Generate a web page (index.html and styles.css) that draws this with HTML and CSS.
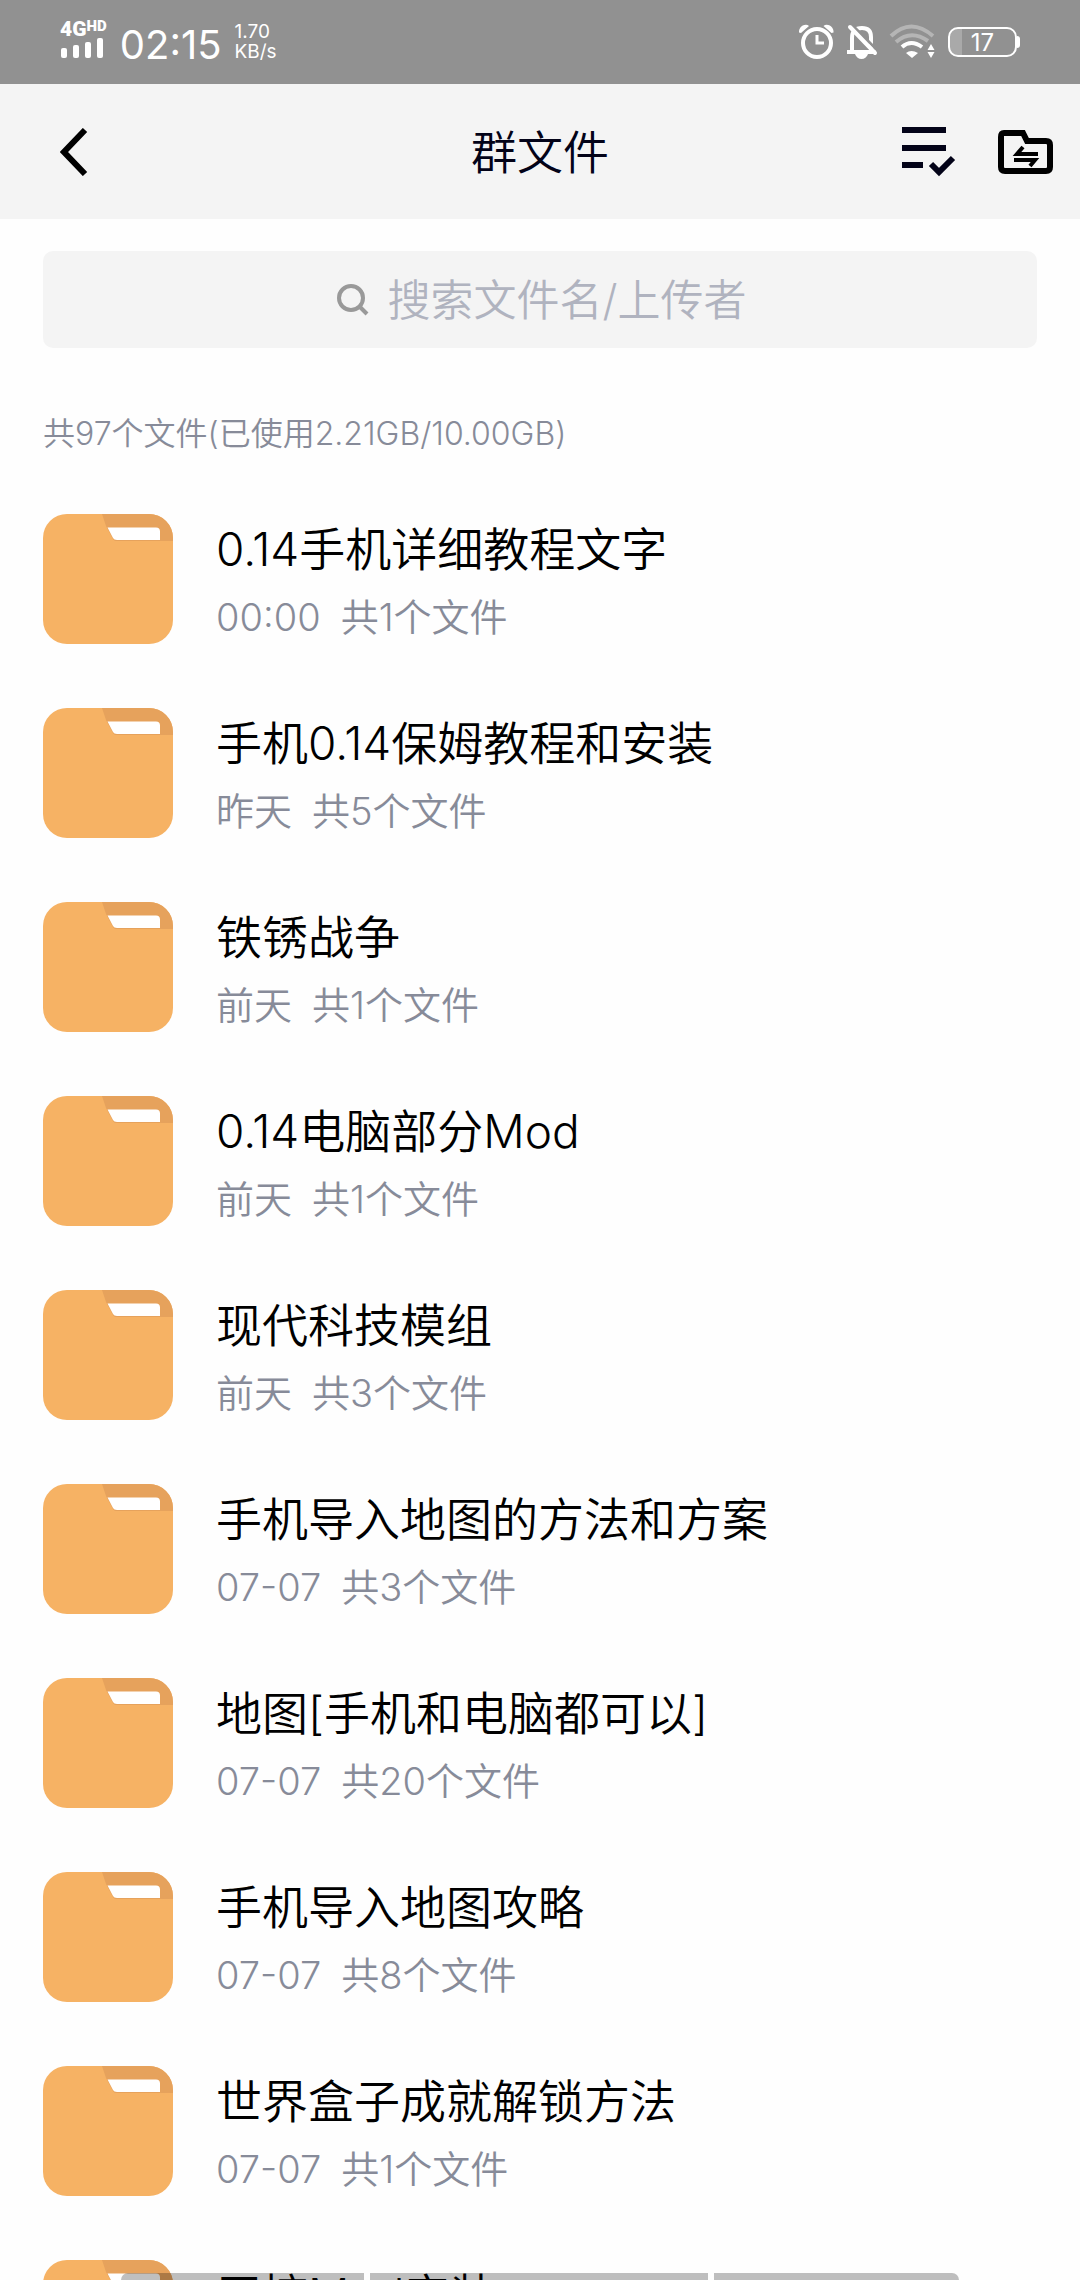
FILE: index.html
```html
<!DOCTYPE html>
<html lang="zh-CN">
<head>
<meta charset="utf-8">
<meta name="viewport" content="width=device-width, initial-scale=1">
<title>群文件</title>
<link rel="stylesheet" href="styles.css">
</head>
<body>
<svg class="sprite" aria-hidden="true">
  <symbol id="folder" viewBox="0 0 130 130">
    <rect width="130" height="130" rx="24" fill="#f6b264"/>
    <path d="M59 0H106A24 24 0 0 1 130 24V27H73Q71 27 70 25L63 12Z" fill="#e6a25c"/>
    <path d="M64.500 13.500H113Q117 13.500 117 17.500V26H74Q71 26 70 24Z" fill="#fff"/>
  </symbol>
</svg>
<div class="screen">
  <div class="status">
    <div class="status-group">
      <div class="signal">
        <span class="network">4G<sup class="hd">HD</sup></span>
        <svg width="44" height="20" viewBox="0 0 44 20" fill="#fff"><rect x="1" y="10" width="6" height="10" rx="2"/><rect x="13" y="7" width="6" height="13" rx="2"/><rect x="25" y="4" width="6" height="16" rx="2"/><rect x="37" y="0" width="6" height="20" rx="2"/></svg>
      </div>
      <time class="clock">02:15</time>
      <div class="speed"><span>1.70</span><span>KB/s</span></div>
    </div>
    <div class="status-group status-right">
      <svg width="36" height="36" viewBox="0 0 36 36" fill="none" stroke="#fff"><circle cx="18" cy="19" r="14" stroke-width="4"/><path d="M18 11V19H25" stroke-width="3"/><path d="M0 8.500A7 7 0 0 1 8.500 1L10 2L2 9ZM34.500 8.500A7 7 0 0 0 26 1L24.500 2L32.500 9Z" fill="#fff" stroke="none"/></svg>
      <svg width="32" height="36" viewBox="0 0 32 36" fill="none" stroke="#fff"><path d="M6 28V14Q6 4 16 4Q25 4 25 13V28" stroke-width="4"/><path d="M1 28H30" stroke-width="4"/><path d="M9 30H22Q20 35 15.500 35Q11 35 9 30Z" fill="#fff" stroke="none"/><path d="M5 0L32 27" stroke="#919191" stroke-width="3"/><path d="M4 3L29 29" stroke-width="4" stroke-linecap="round"/></svg>
      <svg width="48" height="36" viewBox="0 0 48 36" fill="none" stroke="#fff" stroke-width="4"><path d="M2 12Q22 -7 44 12" stroke="#b5b5b5"/><path d="M7 18Q22 5 39 17" stroke="#b5b5b5"/><path d="M13 23Q22 15 33 23"/><path d="M17 29Q22 25 29 29L23 34Z" fill="#fff" stroke="none"/><path d="M42 20L45.500 26H38.500ZM42 34L38.500 28H45.500Z" fill="#fff" stroke="none"/></svg>
      <div class="battery"><span class="battery-level">17</span></div>
    </div>
  </div>

  <header class="nav">
    <div class="nav-side nav-back">
      <button class="icon-button" type="button" aria-label="返回"><svg width="28" height="48" viewBox="0 0 28 48" fill="none" stroke="#000" stroke-width="6"><path d="M25 2L4 24L25 46"/></svg></button>
    </div>
    <h1 class="nav-title">群文件</h1>
    <div class="nav-side nav-actions">
      <button class="icon-button" type="button" aria-label="多选"><svg width="56" height="52" viewBox="0 0 56 52" fill="none" stroke="#030318"><path d="M2 4H46M2 22H46M2 39H23" stroke-width="6"/><path d="M31 38L39 46L53 32" stroke-width="6"/></svg></button>
      <button class="icon-button" type="button" aria-label="传输列表"><svg width="56" height="44" viewBox="0 0 56 44" fill="none" stroke="#000"><path d="M6 3H25L29 11H48Q52 11 52 15V37Q52 41 48 41H7Q3 41 3 37V7Q3 3 6 3Z" stroke-width="6"/><path d="M40 24H19L25 17M16 30H37L32 36" stroke-width="4"/></svg></button>
    </div>
  </header>

  <main class="content">
    <label class="search">
      <svg width="32" height="32" viewBox="0 0 32 32" fill="none" stroke="#999"><circle cx="14" cy="14" r="12" stroke-width="4"/><path d="M22 22L30 30" stroke-width="4"/></svg>
      <input class="search-input" type="text" aria-label="搜索文件" placeholder="搜索文件名/上传者">
    </label>
    <p class="summary">共97个文件(已使用2.21GB/10.00GB)</p>
    <ul class="files">
      <li class="file"><svg class="file-icon"><use href="#folder"/></svg><div class="file-text"><h2 class="file-name">0.14手机详细教程文字</h2><p class="file-meta"><span>00:00</span><span>共1个文件</span></p></div></li>
      <li class="file"><svg class="file-icon"><use href="#folder"/></svg><div class="file-text"><h2 class="file-name">手机0.14保姆教程和安装</h2><p class="file-meta"><span>昨天</span><span>共5个文件</span></p></div></li>
      <li class="file"><svg class="file-icon"><use href="#folder"/></svg><div class="file-text"><h2 class="file-name">铁锈战争</h2><p class="file-meta"><span>前天</span><span>共1个文件</span></p></div></li>
      <li class="file"><svg class="file-icon"><use href="#folder"/></svg><div class="file-text"><h2 class="file-name">0.14电脑部分Mod</h2><p class="file-meta"><span>前天</span><span>共1个文件</span></p></div></li>
      <li class="file"><svg class="file-icon"><use href="#folder"/></svg><div class="file-text"><h2 class="file-name">现代科技模组</h2><p class="file-meta"><span>前天</span><span>共3个文件</span></p></div></li>
      <li class="file"><svg class="file-icon"><use href="#folder"/></svg><div class="file-text"><h2 class="file-name">手机导入地图的方法和方案</h2><p class="file-meta"><span>07-07</span><span>共3个文件</span></p></div></li>
      <li class="file"><svg class="file-icon"><use href="#folder"/></svg><div class="file-text"><h2 class="file-name">地图[手机和电脑都可以]</h2><p class="file-meta"><span>07-07</span><span>共20个文件</span></p></div></li>
      <li class="file"><svg class="file-icon"><use href="#folder"/></svg><div class="file-text"><h2 class="file-name">手机导入地图攻略</h2><p class="file-meta"><span>07-07</span><span>共8个文件</span></p></div></li>
      <li class="file"><svg class="file-icon"><use href="#folder"/></svg><div class="file-text"><h2 class="file-name">世界盒子成就解锁方法</h2><p class="file-meta"><span>07-07</span><span>共1个文件</span></p></div></li>
      <li class="file"><svg class="file-icon"><use href="#folder"/></svg><div class="file-text"><h2 class="file-name">无控Mod安装</h2></div></li>
    </ul>
  </main>
  <div class="gesture-bar"><span></span><span></span><span></span></div>
</div>
</body>
</html>
```
FILE: styles.css
```css
* { box-sizing: border-box; }

body {
  margin: 0;
  background: #fefefe;
  color: #000;
  font-family: Inter, "Noto Sans CJK SC", sans-serif;
  font-weight: 350;
}

h1, h2, p, ul { margin: 0; padding: 0; font-weight: inherit; }

svg { display: block; flex: none; }

.sprite { position: absolute; width: 0; height: 0; }

.screen {
  position: relative;
  display: flex;
  flex-direction: column;
  height: 100vh;
  overflow: hidden;
}

.status {
  display: flex;
  flex: none;
  justify-content: space-between;
  align-items: center;
  height: 84px;
  padding: 0 63px 0 60px;
  background: #919191;
  color: #fff;
}

.status-group { display: flex; align-items: center; gap: 13px; }
.status-right { gap: 11px; }

.signal { display: flex; flex-direction: column; gap: 1px; margin-bottom: 5px; }
.network { display: flex; font-family: Roboto, sans-serif; font-size: 21px; font-weight: 900; line-height: 16px; }
.hd { font-size: 15px; line-height: 11px; }
.clock { margin-top: 5px; font-size: 40px; font-weight: 400; line-height: 48px; }
.speed {
  display: flex;
  flex-direction: column;
  font-size: 19px;
  font-weight: 400;
  line-height: 20px;
}

.battery {
  position: relative;
  width: 69px;
  height: 30px;
  border: 2px solid #fff;
  border-radius: 10px;
  background: linear-gradient(to right, #a9a9a9 12px, transparent 12px);
  font-size: 24px;
  font-weight: 400;
  line-height: 27px;
  text-align: center;
}
.battery::after {
  content: "";
  position: absolute;
  right: -5px;
  top: 7px;
  width: 3px;
  height: 12px;
  border-radius: 0 3px 3px 0;
  background: #fff;
}

.nav {
  display: grid;
  flex: none;
  grid-template-columns: 1fr auto 1fr;
  align-items: center;
  height: 135px;
  padding: 0 26px;
  background: #f4f4f4;
}
.nav-title { font-size: 46px; line-height: 60px; color: #030318; }
.nav-side { display: flex; align-items: center; }
.nav-back { padding-left: 34px; }
.nav-actions { justify-content: flex-end; gap: 42px; }
.icon-button { padding: 0; border: 0; background: none; }

.content { padding: 32px 43px 0; }

.search {
  display: flex;
  justify-content: center;
  align-items: center;
  gap: 19px;
  height: 97px;
  padding-left: 8px;
  border-radius: 10px;
  background: #f4f4f4;
}
.search-input {
  width: 364px;
  padding: 0;
  border: 0;
  outline: 0;
  background: none;
  color: #000;
  font: inherit;
  font-size: 43px;
}
.search-input::placeholder { color: #b0b3bf; opacity: 1; }

.summary {
  margin-top: 63px;
  color: #878b99;
  font-size: 32px;
  line-height: 46px;
}

.files { margin-top: 57px; list-style: none; }
.file { display: flex; gap: 43px; height: 194px; }
.file-icon { width: 130px; height: 130px; }
.file-text { padding-top: 5px; }
.file-name { font-size: 46px; line-height: 60px; }
.file-meta { display: flex; gap: 20px; margin-top: 13px; color: #878b99; font-size: 38px; line-height: 50px; }

.gesture-bar {
  position: absolute;
  left: 121px;
  right: 121px;
  bottom: 0;
  display: grid;
  grid-template-columns: 244fr 340fr 246fr;
  gap: 6px;
  height: 7px;
}
.gesture-bar span { background: rgba(0, 0, 0, 0.25); }
.gesture-bar span:first-child { border-top-left-radius: 7px; }
.gesture-bar span:last-child { border-top-right-radius: 7px; }
```
